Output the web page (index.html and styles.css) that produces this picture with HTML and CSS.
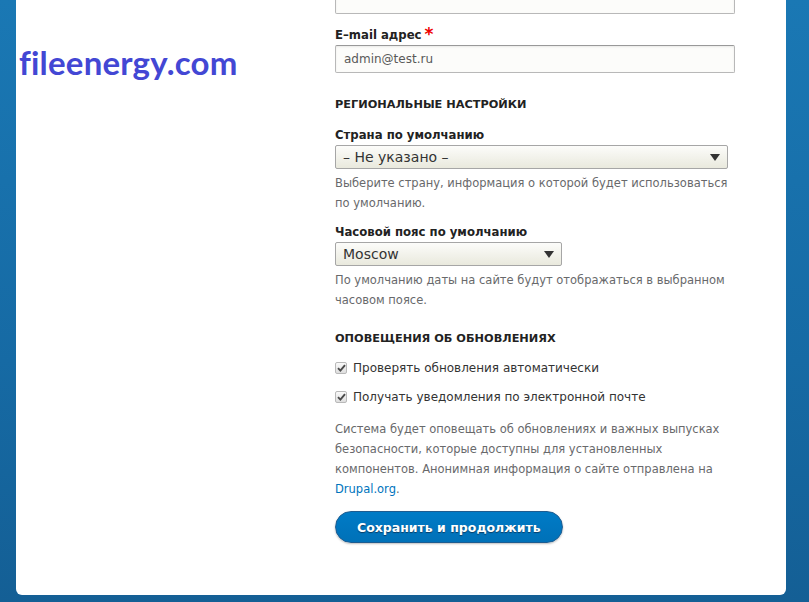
FILE: index.html
```html
<!DOCTYPE html>
<html lang="ru">
<head>
    <meta charset="UTF-8">
    <title>Установка Drupal</title>
    <link rel="stylesheet" href="styles.css">
</head>
<body>

    <div id="page">
        <div id="sidebar">
            <p id="siteLogo">fileenergy.com</p>
        </div>

        <form id="installForm">
            <div class="formItem">
                <input class="textInput" type="text" value="">
            </div>

            <div class="formItem lastInGroup">
                <label class="fieldLabel">E–mail адрес<span class="required">*</span></label>
                <input class="textInput" type="text" value="admin@test.ru">
            </div>

            <h3 class="groupTitle">Региональные настройки</h3>

            <div class="formItem withDesc">
                <label class="fieldLabel">Страна по умолчанию</label>
                <div class="selectBox wide">
                    <span>– Не указано –</span>
                    <span class="arrow"></span>
                </div>
                <p class="description">Выберите страну, информация о которой будет использоваться по умолчанию.</p>
            </div>

            <div class="formItem withDesc">
                <label class="fieldLabel">Часовой пояс по умолчанию</label>
                <div class="selectBox narrow">
                    <span>Moscow</span>
                    <span class="arrow"></span>
                </div>
                <p class="description">По умолчанию даты на сайте будут отображаться в выбранном часовом поясе.</p>
            </div>

            <h3 class="groupTitle">Оповещения об обновлениях</h3>

            <div class="checkItem">
                <span class="checkBox">
                    <svg width="9" height="8" viewBox="0 0 9 8"><path d="M1 4.2 L3.4 6.6 L8 1.2" fill="none" stroke="#4a4a4a" stroke-width="1.9"/></svg>
                </span>
                <span>Проверять обновления автоматически</span>
            </div>
            <div class="checkItem">
                <span class="checkBox">
                    <svg width="9" height="8" viewBox="0 0 9 8"><path d="M1 4.2 L3.4 6.6 L8 1.2" fill="none" stroke="#4a4a4a" stroke-width="1.9"/></svg>
                </span>
                <span>Получать уведомления по электронной почте</span>
            </div>

            <p class="description notice">Система будет оповещать об обновлениях и важных выпусках безопасности, которые доступны для установленных компонентов. Анонимная информация о сайте отправлена на <a href="#">Drupal.org</a>.</p>

            <div class="actions">
                <button class="btnPrimary" type="button">Сохранить и продолжить</button>
            </div>
        </form>
    </div>

</body>
</html>
```

FILE: styles.css
```css
*{
    box-sizing: border-box;
}

html, body{
    height: 100%;
}

body{
    margin: 0;
    overflow: hidden;
    font-family: "DejaVu Sans", Verdana, sans-serif;
    color: #333;
    background: linear-gradient(180deg, #1a78b4 0%, #166aa4 60%, #145f95 100%);
}

/* page is scrolled a little, so the first field is cut at the top */
#page{
    display: flex;
    width: 770px;
    height: 609px;
    margin-left: 16px;
    margin-top: -14px;
    background-color: #fff;
    border-radius: 0 0 6px 6px;
}

#sidebar{
    width: 319px;
    padding-top: 56px;
}

#siteLogo{
    margin: 0 0 0 3px;
    font-family: Lato, "Open Sans", sans-serif;
    font-weight: bold;
    font-size: 33px;
    color: #4347d4;
    letter-spacing: 0.2px;
}

#installForm{
    width: 400px;
}

.formItem{
    margin-bottom: 12px;
}

.formItem.lastInGroup{
    margin-bottom: 25px;
}

.formItem.withDesc{
    margin-bottom: 10px;
}

.fieldLabel{
    display: block;
    padding-top: 2px;
    font-size: 11.7px;
    line-height: 15px;
    font-weight: bold;
    color: #222;
    margin-bottom: 2px;
}

.required{
    color: #e00;
    font-size: 17px;
    margin-left: 3px;
    vertical-align: -1px;
    line-height: 10px;
}

.textInput{
    display: block;
    width: 400px;
    height: 28px;
    margin: 0;
    padding: 3px 8px;
    border: 1px solid #b8b8b8;
    border-top-color: #999;
    border-radius: 2px;
    background-color: #fcfcfa;
    font-family: "DejaVu Sans", Verdana, sans-serif;
    font-size: 12px;
    color: #595959;
    box-shadow: inset 0 1px 2px rgba(0, 0, 0, 0.08);
}

.groupTitle{
    margin: 22px 0 15px;
    font-size: 11.3px;
    font-weight: bold;
    text-transform: uppercase;
    color: #222;
}

.selectBox{
    display: flex;
    align-items: center;
    justify-content: space-between;
    height: 24px;
    padding: 0 7px 0 7px;
    border: 1px solid #a6a6a6;
    border-radius: 2px;
    background: linear-gradient(180deg, #fcfcfa 0%, #e9e9dd 100%);
    font-size: 14px;
    color: #333;
}

.selectBox.wide{
    width: 393px;
}

.selectBox.narrow{
    width: 227px;
}

.arrow{
    width: 0;
    height: 0;
    border-left: 5px solid transparent;
    border-right: 5px solid transparent;
    border-top: 7px solid #333;
}

.description{
    margin: 4px 0 0;
    font-size: 11.5px;
    line-height: 20px;
    color: #68696b;
}

.checkItem{
    display: flex;
    align-items: center;
    gap: 6px;
    height: 16px;
    margin-bottom: 13px;
    font-size: 12px;
    color: #333;
}

.checkBox{
    display: flex;
    align-items: center;
    justify-content: center;
    width: 12px;
    height: 12px;
    border: 1px solid #b9b9b9;
    border-radius: 2px;
    background: linear-gradient(180deg, #fafafa, #dedede);
}

.notice{
    margin-top: 14px;
}

.notice a{
    color: #0074bd;
    text-decoration: none;
}

.actions{
    margin-top: 12px;
}

.btnPrimary{
    height: 32px;
    padding: 0 21px;
    border: 1px solid #1e5c90;
    border-radius: 20px;
    background: linear-gradient(180deg, #007bc6 0%, #0071b8 100%);
    font-family: "DejaVu Sans", Verdana, sans-serif;
    font-size: 12.5px;
    font-weight: bold;
    color: #fff;
    text-shadow: 0 1px 1px #0a3d66;
    box-shadow: 0 1px 2px rgba(0, 0, 0, 0.25);
}
```
